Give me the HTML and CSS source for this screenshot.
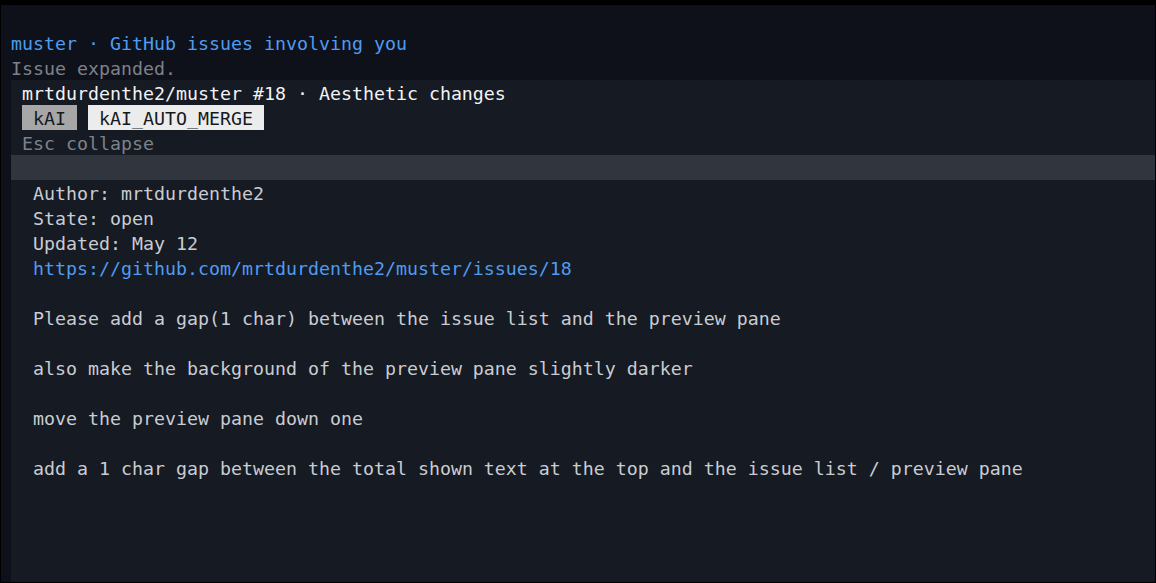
FILE: index.html
```html
<!DOCTYPE html>
<html lang="en">
<head>
<meta charset="utf-8">
<title>muster · GitHub issues involving you</title>
<link rel="stylesheet" href="styles.css">
</head>
<body>
<div class="screen">
  <div class="row"></div>
  <div class="row header">muster · GitHub issues involving you</div>
  <div class="row status">Issue expanded.</div>
  <section class="panel">
    <div class="row title">mrtdurdenthe2/muster #18 · Aesthetic changes</div>
    <div class="row tags">
      <span class="tag tag-muted">kAI</span>
      <span class="tag tag-bright">kAI_AUTO_MERGE</span>
    </div>
    <div class="row hint">Esc collapse</div>
    <div class="row bar"></div>
    <div class="body">
      <div class="row">Author: mrtdurdenthe2</div>
      <div class="row">State: open</div>
      <div class="row">Updated: May 12</div>
      <div class="row link">https://github.com/mrtdurdenthe2/muster/issues/18</div>
      <div class="row"></div>
      <div class="row">Please add a gap(1 char) between the issue list and the preview pane</div>
      <div class="row"></div>
      <div class="row">also make the background of the preview pane slightly darker</div>
      <div class="row"></div>
      <div class="row">move the preview pane down one</div>
      <div class="row"></div>
      <div class="row">add a 1 char gap between the total shown text at the top and the issue list / preview pane</div>
    </div>
  </section>
</div>
</body>
</html>
```

FILE: styles.css
```css
html, body {
  margin: 0;
  padding: 0;
  background: #000000;
}

body {
  width: 1156px;
  height: 583px;
  overflow: hidden;
}

.screen {
  margin: 5px 1px 1px 1px;
  height: 577px;
  background: #0e111a;
  display: flex;
  flex-direction: column;
  overflow: hidden;
  font-family: "DejaVu Sans Mono", "Liberation Mono", monospace;
  font-size: 18.27px;
  line-height: 25px;
  color: #c9ccd2;
}

.row {
  box-sizing: border-box;
  height: 25px;
  padding-top: 1px;
  white-space: pre;
  flex: none;
}

.header {
  padding-left: 10px;
  color: #4f9cf0;
}

.status {
  padding-left: 10px;
  color: #7d828a;
}

.panel {
  flex: 1;
  margin-left: 10px;
  background: #161a22;
  display: flex;
  flex-direction: column;
}

.title {
  padding-left: 11px;
  color: #f2f3f5;
}

.tags {
  padding-top: 0;
  padding-left: 11px;
  display: flex;
  gap: 11px;
}

.tag {
  display: block;
  box-sizing: border-box;
  height: 25px;
  padding: 1px 11px 0;
  color: #15181d;
}

.tag-muted {
  background: #a7a7a7;
}

.tag-bright {
  background: #ececec;
}

.hint {
  padding-left: 11px;
  color: #7d828a;
}

.bar {
  background: #30353e;
}

.body {
  padding-left: 22px;
  display: flex;
  flex-direction: column;
}

.link {
  color: #4f9cf0;
}
```
